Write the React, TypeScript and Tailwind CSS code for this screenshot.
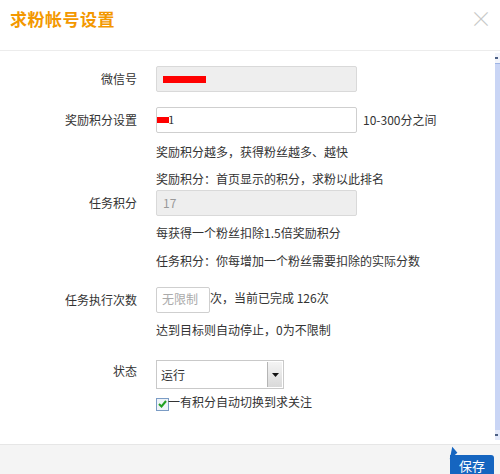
import React from "react";

const FONT = { fontFamily: '"SimSun", "Noto Sans CJK SC", sans-serif' };

function Label({ children }: { children: React.ReactNode }) {
  return <div className="w-[137px] shrink-0 text-right text-[12px] text-[#333]">{children}</div>;
}

function Hint({ children, className = "" }: { children: React.ReactNode; className?: string }) {
  return (
    <div className={`pl-[156px] h-[20px] leading-[20px] text-[12px] text-[#333] ${className}`}>{children}</div>
  );
}

export default function App() {
  return (
    <div className="w-[500px] h-[474px] overflow-hidden bg-white flex flex-col" style={FONT}>
      {/* header */}
      <div className="h-[51px] shrink-0 flex items-start justify-between border-b border-[#ececec]">
        <div className="pl-[10px] pt-[6px] text-[17px] font-bold text-[#f39800] tracking-[0.5px]">求粉帐号设置</div>
        <div className="pr-[8px] pt-[6px] text-[22px] font-light leading-none text-[#c8c8c8]">×</div>
      </div>

      {/* body */}
      <div className="flex flex-1 min-h-0">
        <div className="flex-1 pt-[15px]">
          <div className="flex items-center h-[26px]">
            <Label>微信号</Label>
            <div className="ml-[19px] w-[201px] h-[26px] border border-[#d9d9d9] bg-[#eeeeee] rounded-[2px] flex items-center pl-[6px]">
              <div className="w-[43px] h-[7px] bg-[#ff0000]" />
            </div>
          </div>

          <div className="flex items-center h-[26px] mt-[15px]">
            <Label>奖励积分设置</Label>
            <div className="ml-[19px] w-[201px] h-[26px] border border-[#cfcfcf] bg-white rounded-[2px] flex items-center">
              <div className="w-[12px] h-[6px] bg-[#ff0000]" />
              <span className="text-[12px] text-[#333] font-serif">1</span>
            </div>
            <span className="ml-[6px] text-[12px] text-[#333]">10-300分之间</span>
          </div>

          <Hint className="mt-[9px]">奖励积分越多，获得粉丝越多、越快</Hint>
          <Hint className="mt-[7px]">奖励积分：首页显示的积分，求粉以此排名</Hint>

          <div className="flex items-center h-[26px] mt-[1px]">
            <Label>任务积分</Label>
            <div className="ml-[19px] w-[201px] h-[26px] border border-[#d9d9d9] bg-[#eeeeee] rounded-[2px] flex items-center pl-[6px] text-[12px] text-[#999]">
              17
            </div>
          </div>

          <Hint className="mt-[7px]">每获得一个粉丝扣除1.5倍奖励积分</Hint>
          <Hint className="mt-[8px]">任务积分：你每增加一个粉丝需要扣除的实际分数</Hint>

          <div className="flex items-center h-[26px] mt-[16px]">
            <Label>任务执行次数</Label>
            <div className="ml-[19px] w-[54px] h-[26px] border border-[#cfcfcf] bg-white rounded-[2px] flex items-start pt-[2px] pl-[5px] text-[12px] text-[#aaa]">
              无限制
            </div>
            <span className="text-[12px] text-[#333] -mt-[4px]">次，当前已完成 126次</span>
          </div>

          <Hint className="mt-[7px]">达到目标则自动停止，0为不限制</Hint>

          <div className="flex items-center h-[29px] mt-[20px]">
            <Label>
              <span className="relative -top-[4px]">状态</span>
            </Label>
            <div className="ml-[19px] w-[128px] h-[29px] border border-[#c9c9c9] bg-white flex items-stretch">
              <div className="flex-1 flex items-center pl-[4px] text-[12px] text-[#333]">运行</div>
              <div className="w-[15px] m-[1px] bg-gradient-to-b from-[#f4f4f4] to-[#d9d9d9] border-l border-[#b5b5b5] flex items-center justify-center">
                <svg width="7" height="4" viewBox="0 0 7 4">
                  <path d="M0 0h7L3.5 4z" fill="#111" />
                </svg>
              </div>
            </div>
          </div>

          <div className="flex items-center h-[16px] mt-[5px] pl-[156px]">
            <div className="w-[13px] h-[13px] border border-[#7b9cc5] bg-[#eef3f8] flex items-center justify-center mt-[4px]">
              <svg width="9" height="8" viewBox="0 0 9 8">
                <path d="M1 4l2.5 2.5L8 1" stroke="#21a121" strokeWidth="2" fill="none" />
              </svg>
            </div>
            <span className="text-[12px] text-[#333] -ml-[1px]">一有积分自动切换到求关注</span>
          </div>
        </div>

        {/* scrollbar */}
        <div className="w-[5px] shrink-0 flex flex-col pt-[2px] pb-[4px]">
          <div className="h-[11px] bg-[#f2f4fb] border-b border-[#9eb4e4] flex items-center">
            <div className="w-[3px] h-[2px] bg-[#4d6185]" />
          </div>
          <div className="flex-1 bg-[#c9d5f5]" />
          <div className="h-[10px] bg-[#e3e9fa] flex items-center">
            <div className="w-[3px] h-[2px] bg-[#4d6185]" />
          </div>
        </div>
      </div>

      {/* footer */}
      <div className="h-[30px] shrink-0 bg-[#f4f4f4] border-t border-[#e6e6e6] flex justify-end items-start pr-[6px]">
        <div className="relative mt-[10px] w-[44px] h-[30px] bg-[#1565c0] rounded-tr-[3px] flex items-start justify-center pt-[2px] text-[13px] leading-[17px] text-white">
          <div className="absolute -left-[4px] -top-[6px] w-0 h-0 border-l-[10px] border-l-transparent border-b-[8px] border-b-[#1565c0] rotate-[-40deg]" />
          保存
        </div>
      </div>
    </div>
  );
}
